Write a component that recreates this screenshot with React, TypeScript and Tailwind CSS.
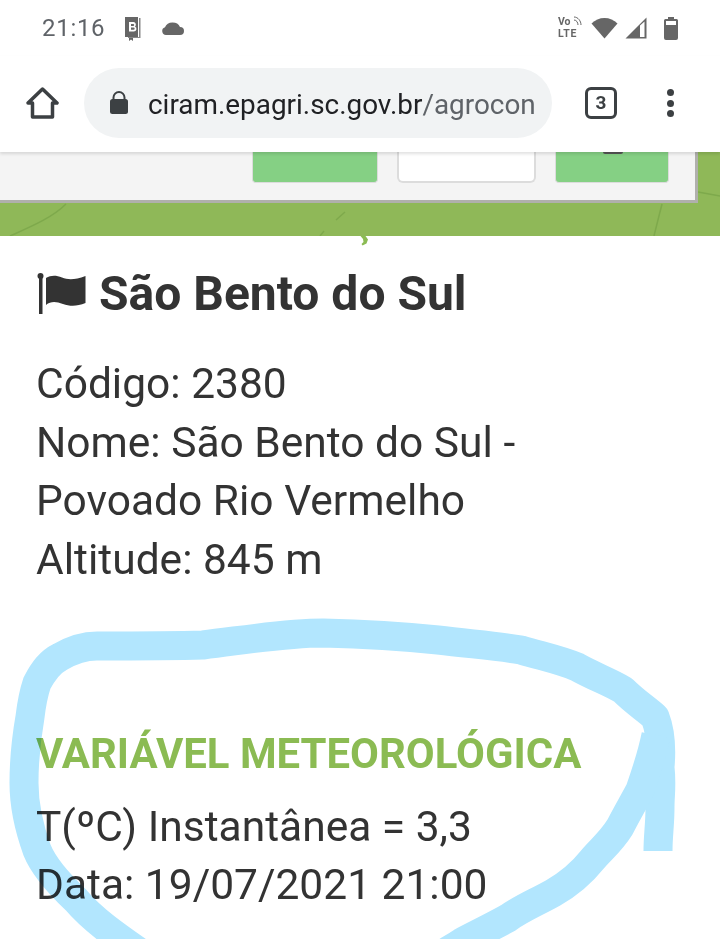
export default function App() {
  return (
    <div className="relative h-[939px] w-[720px] overflow-hidden bg-white font-['Roboto',sans-serif] text-[#333]">
      {/* Status bar */}
      <div className="flex h-[56px] items-center justify-between pl-[42px] pr-[42px] text-[#5f6368]">
        <div className="flex items-center">
          <span className="text-[24px] leading-none tracking-[0.7px]">21:16</span>
          <svg className="ml-[19px]" width="18" height="26" viewBox="0 0 18 26">
            <path d="M1 2h13v20H1z" fill="#666" />
            <path d="M15 3h1.500v20H4v-1h11z" fill="#888" />
            <path d="M5 23h4v3l-2-1.500L5 26z" fill="#666" />
            <path d="M5 7h4.500a2.500 2.500 0 0 1 1.500 4.400A2.700 2.700 0 0 1 9.800 16.500H5zM7 9v2h2.200a1 1 0 0 0 0-2zM7 12.500v2.300h2.500a1.100 1.100 0 0 0 0-2.300z" fill="#fff" fillRule="evenodd" />
          </svg>
          <svg className="ml-[19px]" width="24" height="16" viewBox="0 0 24 16">
            <path d="M5 15a4 4 0 0 1-1-7.800A8 7 0 0 1 19 7a4 4 0 0 1 0 8z" fill="#666" />
          </svg>
        </div>
        <div className="flex items-center">
          <div className="relative mr-[9px] flex w-[24px] flex-col text-[10.500px] font-bold leading-[12.500px] text-[#666]">
            <span className="w-[15px]">Vo</span>
            <span className="tracking-[0.8px]">LTE</span>
            <svg className="absolute right-0 top-0" width="9" height="10" viewBox="0 0 9 10" fill="none" stroke="#666" strokeWidth="1">
              <path d="M1 1c4 0 7 4 7 8M1 4c2.500 0 4 2.500 4 5" />
            </svg>
          </div>
          <svg width="27" height="22" viewBox="0 0 27 22">
            <path d="M0.500 6.500C4 3 8.500 1 13.500 1s9.500 2 13 5.500L13.500 21.500z" fill="#666" />
          </svg>
          <svg className="ml-[7px]" width="22" height="22" viewBox="0 0 22 22">
            <path d="M0.500 21.500L21.500 0.500v21z" fill="#666" />
            <path d="M15 8.500l4.500-4v15.500H15z" fill="#fff" />
          </svg>
          <svg className="ml-[17px]" width="14" height="23" viewBox="0 0 14 23">
            <path d="M4 0h6v2h2.500a1.500 1.500 0 0 1 1.500 1.500V21a2 2 0 0 1-2 2H2a2 2 0 0 1-2-2V3.500A1.500 1.500 0 0 1 1.500 2H4z" fill="#666" />
            <path d="M2 4h10v4H2z" fill="#fff" />
          </svg>
        </div>
      </div>

      {/* Chrome toolbar */}
      <div className="relative z-10 flex h-[96px] items-start bg-white shadow-[0_2px_3px_rgba(0,0,0,0.12)]">
        <svg className="ml-[26px] mt-[30px]" width="33" height="33" viewBox="0 0 33 33" fill="none" stroke="#3c4043" strokeWidth="3.500" strokeLinejoin="round">
          <path d="M2 17L16.500 3 31 17h-4.500v14h-20V17z" />
        </svg>
        <div className="ml-[25px] mt-[12px] flex h-[70px] w-[468px] items-center overflow-hidden rounded-full bg-[#f1f3f4] pl-[26px]">
          <svg width="18" height="24" viewBox="0 0 18 24" className="shrink-0">
            <path d="M3.500 9V6.500a5.500 5.500 0 0 1 11 0V9" fill="none" stroke="#3c4043" strokeWidth="2" />
            <rect x="0" y="8" width="18" height="15" rx="2.500" fill="#3c4043" />
          </svg>
          <div className="ml-[20px] w-[388px] overflow-hidden whitespace-nowrap pt-[3px] text-[27.900px] leading-[34px] text-[#202124]">
            ciram.epagri.sc.gov.br<span className="text-[#5f6368]">/agrocon</span>
          </div>
        </div>
        <div className="ml-[33px] mt-[31px] flex h-[32px] w-[32px] items-center justify-center rounded-[6px] border-[3px] border-[#3c4043] text-[19px] font-bold text-[#3c4043]">
          3
        </div>
        <div className="ml-[50px] mt-[33px] flex flex-col gap-[3.500px]">
          <span className="h-[7px] w-[7px] rounded-full bg-[#3c4043]" />
          <span className="h-[7px] w-[7px] rounded-full bg-[#3c4043]" />
          <span className="h-[7px] w-[7px] rounded-full bg-[#3c4043]" />
        </div>
      </div>

      {/* Map strip */}
      <div className="relative h-[84px] bg-[#8fb858]">
        <svg className="absolute inset-0" width="720" height="84" viewBox="0 0 720 84" fill="none" stroke="#7ea94c" strokeWidth="1.500">
          <path d="M10 84C30 75 52 66 66 52" />
          <path d="M336 68l9-8M320 84l4-5" />
          <path d="M654 84l8-32" />
          <path d="M698 40l22 4" />
        </svg>
        <div className="relative flex h-[51px] w-[698px] justify-end gap-[19px] border-b-[3px] border-r-[3px] border-[#b0b0ac] bg-[#f4f4f4] pr-[26px]">
          <div className="h-[31px] w-[126px] rounded-b-[4px] border border-t-0 border-[#dcdcdc] bg-[#85d084]" />
          <div className="h-[31px] w-[139px] rounded-b-[6px] border-2 border-t-0 border-[#dcdcdc] bg-white" />
          <div className="relative h-[31px] w-[114px] rounded-b-[4px] border border-t-0 border-[#dcdcdc] bg-[#85d084]">
            <div className="absolute left-[47px] top-0 h-[2px] w-[20px] rounded-b-full bg-[#555]" />
          </div>
        </div>
      </div>
      <svg className="absolute left-[360px] top-[236px]" width="9" height="10" viewBox="0 0 9 10">
        <path d="M0.500 0H5.500L8 3.500 6.500 7.500 2.500 9.500 1.500 8 3.500 6 3 3z" fill="#8bbb53" />
      </svg>

      {/* Content */}
      <div className="pl-[36px]">
        <h1 className="ml-[1px] mt-[28px] flex h-[60px] items-center text-[48px] font-bold leading-none">
          <svg width="49" height="42" viewBox="0 0 49 42" className="mr-[13px] shrink-0">
            <circle cx="3.500" cy="3" r="3" fill="#333" />
            <rect x="2" y="4" width="3.500" height="37" fill="#333" />
            <path d="M9 5C14 2 19 2 25 4.500S38 7 48.500 3V30C40 33.500 33 33.500 26 31S14 28 9 32z" fill="#333" />
          </svg>
          São Bento do Sul
        </h1>
        <div className="mt-[31px] text-[42.500px] leading-[58.500px]">
          <p>Código: 2380</p>
          <p>Nome: São Bento do Sul -</p>
          <p>Povoado Rio Vermelho</p>
          <p>Altitude: 845 m</p>
        </div>
        <h2 className="mt-[136px] text-[41.900px] font-bold leading-[58.500px] text-[#8bbb53]">VARIÁVEL METEOROLÓGICA</h2>
        <div className="mt-[14px] text-[42.500px] leading-[58.500px]">
          <p>T(ºC) Instantânea = 3,3</p>
          <p>Data: 19/07/2021 21:00</p>
        </div>
      </div>

      {/* Hand-drawn annotation over the page */}
      <svg className="pointer-events-none absolute inset-0 z-20 mix-blend-multiply" width="720" height="939" viewBox="0 0 720 939" fill="none" stroke="#b2e6fe" strokeWidth="29" strokeLinejoin="round">
        <path d="M172 975C130 945 97 925 76 900C55 880 43 865 37 850C28 825 24 805 24 783C24 760 26 740 30 717C32 700 34 692 37 683C44 670 50 662 60 657C72 650 84 646 97 646C130 646 170 646 203 645C245 640 285 633 323 633C365 634 400 636 438 640C470 644 498 646 521 650C545 657 560 660 577 667C595 677 610 682 623 690C635 702 645 708 655 717C660 730 662 745 660 767C662 785 660 795 660 807C660 825 658 835 658 851" />
        <path d="M656 735C652 755 647 770 640 790C632 805 626 815 620 827C610 843 600 850 592 860C580 875 567 885 553 893C535 903 522 908 508 918C490 928 475 935 462 942C450 950 443 953 435 960" />
      </svg>
    </div>
  );
}
